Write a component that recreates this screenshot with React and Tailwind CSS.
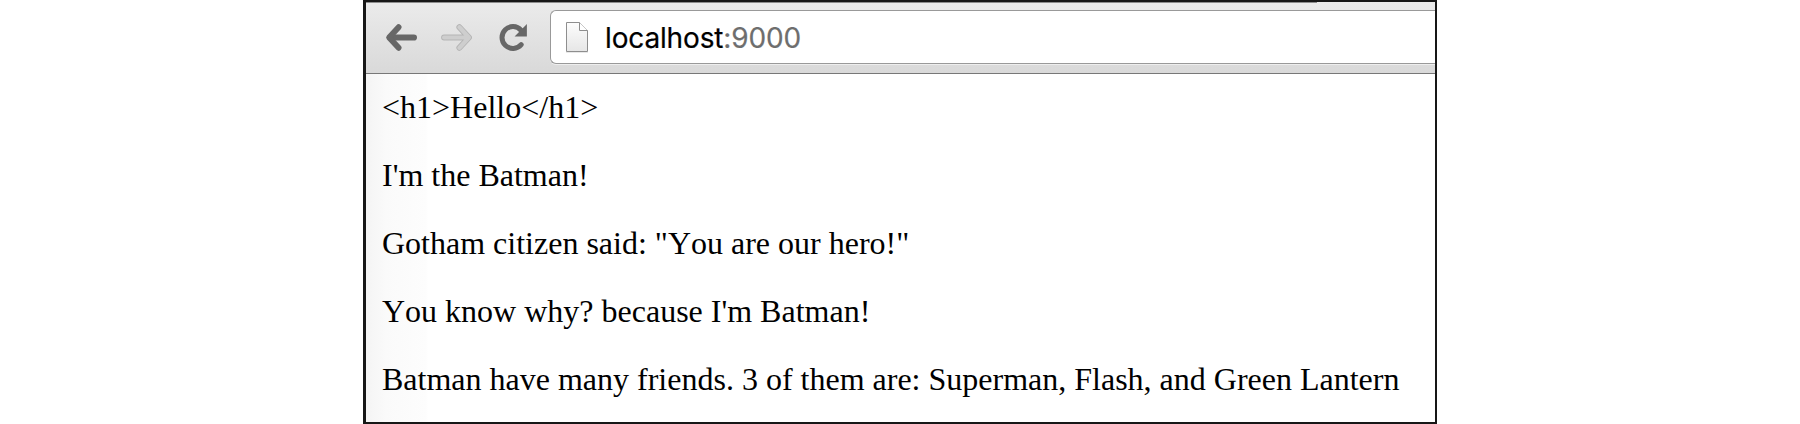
const lines = [
  "<h1>Hello</h1>",
  "I'm the Batman!",
  'Gotham citizen said: "You are our hero!"',
  "You know why? because I'm Batman!",
  "Batman have many friends. 3 of them are: Superman, Flash, and Green Lantern",
];

function BackArrow() {
  return (
    <svg className="h-8 w-8 shrink-0" viewBox="0 0 32 32" fill="none" stroke="#676767" strokeWidth="6.2" strokeLinecap="round" strokeLinejoin="round">
      <path d="M28.9 15.5H6" />
      <path d="M13.6 5.2 4.1 15.5l9.5 10.3" strokeWidth="5.8" />
    </svg>
  );
}

function ForwardArrow() {
  const shape = "M4.1 15.5H26M19.4 5.2 28.9 15.5 19.4 25.8";
  return (
    <svg className="h-8 w-8 shrink-0" viewBox="0 0 32 32" fill="none" strokeLinecap="round" strokeLinejoin="round">
      <path d={shape} stroke="#b5b5b5" strokeWidth="6" />
      <path d={shape} stroke="#cecece" strokeWidth="4.2" />
    </svg>
  );
}

function Reload() {
  return (
    <svg className="h-8 w-8 shrink-0" viewBox="0 0 32 32">
      <path d="M23.2 22.6A10.9 10.9 0 1 1 23 8.2" fill="none" stroke="#676767" strokeWidth="5" strokeLinecap="round" />
      <path d="M28.9 2V14.4H16.6Z" fill="#676767" />
    </svg>
  );
}

function PageIcon() {
  return (
    <svg className="h-8 w-6 shrink-0" viewBox="0 0 24 32">
      <defs>
        <linearGradient id="sheet" x1="0" y1="0" x2="0" y2="1">
          <stop offset="0" stopColor="#fdfdfd" />
          <stop offset="1" stopColor="#e6e6e6" />
        </linearGradient>
      </defs>
      <path d="M1 31.5H23" stroke="#e8e8e8" />
      <path d="M1.5 1.5H14.5L22.5 9.5V30.5H1.5Z" fill="url(#sheet)" stroke="#8e8e8e" />
      <path d="M14.5 1.5V9.5H22.5" fill="#fff" stroke="#8e8e8e" />
    </svg>
  );
}

export default function App() {
  return (
    <div className="flex h-[424px] w-[1800px] overflow-hidden bg-white pl-[363px]">
      <div className="flex h-[424px] w-[1074px] flex-col overflow-hidden border-2 border-l-3 border-[#171717] bg-white">
        <div className="flex h-[72px] shrink-0 flex-col border-b border-[#777] bg-linear-to-b from-[#ebebeb] to-[#d9d9d9]">
          <div className="h-px w-[951px] shrink-0 bg-[#8d8d8d]" />
          <div className="flex pt-[7px]">
            <div className="flex items-start pt-3 pl-[19px]">
              <BackArrow />
              <div className="w-[23px]" />
              <ForwardArrow />
              <div className="w-[26px]" />
              <Reload />
            </div>
            <div className="ml-5 flex h-[54px] flex-1 items-center rounded-l-[6px] border border-r-0 border-[#999] bg-white pl-[14px] shadow-[0_1px_0_#eeeeee]">
              <PageIcon />
              <div className="ml-4 pt-[1px] font-['Inter',sans-serif] text-[28px] leading-8 tracking-[-0.15px] whitespace-nowrap text-black [-webkit-text-stroke:0.2px]">
                localhost<span className="text-[#6e6e6e]">:9000</span>
              </div>
            </div>
          </div>
        </div>
        <div className="flex flex-1 flex-col gap-8 bg-[linear-gradient(to_right,#f4f4f4_0,#fafafa_20px,#fdfdfd_60px,#ffffff_62px)] pt-[15px] pl-4 font-['Liberation_Serif',serif] text-[32px] leading-9 whitespace-nowrap text-black [font-kerning:none]">
          {lines.map((line) => (
            <p key={line}>{line}</p>
          ))}
        </div>
      </div>
    </div>
  );
}
